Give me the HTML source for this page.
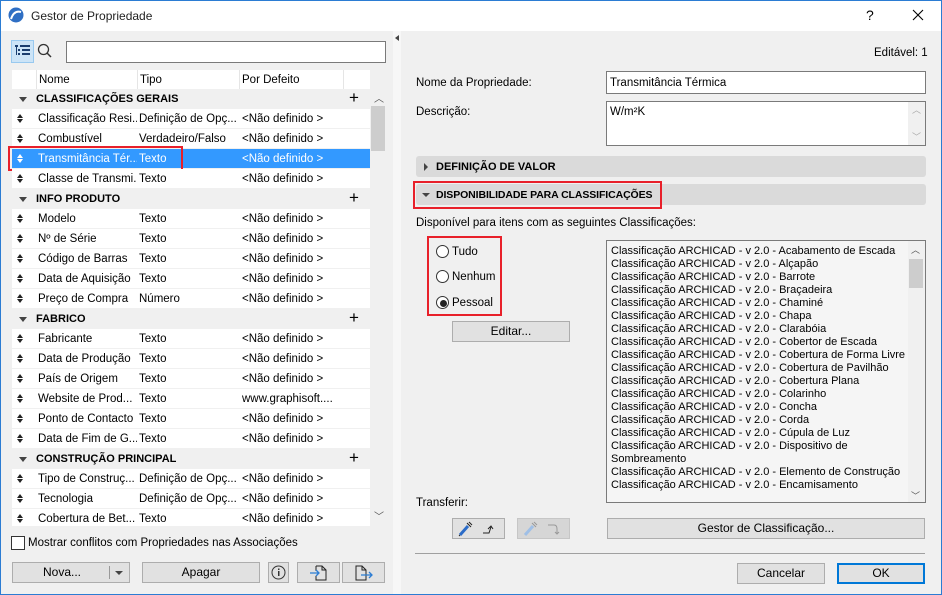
<!DOCTYPE html>
<html><head><meta charset="utf-8">
<style>
*{box-sizing:border-box;margin:0;padding:0}
body{width:942px;height:595px;overflow:hidden;font-family:"Liberation Sans",sans-serif;font-size:12px;color:#000;background:#f0f0f0;position:relative}
.a{position:absolute}
.win{left:0;top:0;width:942px;height:595px;border:1px solid #2b7cd3;background:#f0f0f0}
.title{left:1px;top:1px;width:940px;height:30px;background:#fff}
.btn{position:absolute;background:#e1e1e1;border:1px solid #adadad;text-align:center;line-height:18px;font-size:12px}
.row{position:absolute;left:12px;width:358px;height:19px;background:#fff;line-height:20px;white-space:nowrap;font-size:11.5px}
.grp{position:absolute;left:12px;width:358px;height:19px;background:#f0f0f0;line-height:20px;font-weight:bold;font-size:11px}
.c1{position:absolute;left:26px;width:99px;overflow:hidden}.c2{position:absolute;left:127px;width:101px;overflow:hidden}.c3{position:absolute;left:230px}
.sort{position:absolute;left:5px;top:5px;width:7px;height:10px}
.sort:before{content:"";position:absolute;left:0;top:0;border-left:3.5px solid transparent;border-right:3.5px solid transparent;border-bottom:4px solid #222}
.sort:after{content:"";position:absolute;left:0;top:5px;border-left:3.5px solid transparent;border-right:3.5px solid transparent;border-top:4px solid #222}
.sel .sort:before{border-bottom-color:#fff}.sel .sort:after{border-top-color:#fff}
.plus{position:absolute;left:337px;top:-1px;font-size:17px;font-weight:normal}
.tri{position:absolute;left:7px;top:8px;width:0;height:0;border-left:4px solid transparent;border-right:4px solid transparent;border-top:5px solid #444}
.lst div{height:13px;line-height:13px;white-space:nowrap;font-size:11px}
.radio{position:absolute;width:13px;height:13px;border:1px solid #333;border-radius:50%;background:#fff}
</style></head><body>
<div class="a win"></div>
<div class="a title"></div>
<svg class="a" style="left:8px;top:7px" width="16" height="16"><circle cx="8" cy="8" r="7.5" fill="#2f6fc4"/><path d="M3 12 Q6 3 13 5" stroke="#fff" stroke-width="2" fill="none"/></svg>
<div class="a" style="left:31px;top:9px;font-size:12px;color:#222">Gestor de Propriedade</div>
<div class="a" style="left:866px;top:7px;font-size:14px">?</div>
<svg class="a" style="left:912px;top:9px" width="12" height="12"><path d="M1 1L11 11M11 1L1 11" stroke="#000" stroke-width="1.1"/></svg>

<div class="a" style="left:11px;top:40px;width:23px;height:23px;background:#cce4f7;border:1px solid #99c9ef"></div>
<svg class="a" style="left:14px;top:44px" width="18" height="14"><g fill="#1a3d6e"><rect x="1" y="1" width="3" height="2"/><rect x="6" y="1" width="10" height="2"/><rect x="4" y="5" width="2" height="2"/><rect x="8" y="5" width="8" height="2"/><rect x="4" y="9" width="2" height="2"/><rect x="8" y="9" width="8" height="2"/><rect x="2" y="3" width="1" height="8"/></g></svg>
<svg class="a" style="left:37px;top:43px" width="16" height="16"><circle cx="6.5" cy="6.5" r="5" stroke="#333" stroke-width="1.3" fill="none"/><path d="M10 10L14 14" stroke="#333" stroke-width="1.5"/></svg>
<div class="a" style="left:66px;top:41px;width:320px;height:22px;border:1px solid #7a7a7a;background:#fff"></div>

<div class="a" style="left:12px;top:70px;width:358px;height:19px;background:#fff"></div>
<div class="a" style="left:36px;top:70px;width:1px;height:19px;background:#e5e5e5"></div>
<div class="a" style="left:137px;top:70px;width:1px;height:19px;background:#e5e5e5"></div>
<div class="a" style="left:239px;top:70px;width:1px;height:19px;background:#e5e5e5"></div>
<div class="a" style="left:343px;top:70px;width:1px;height:19px;background:#e5e5e5"></div>
<div class="a" style="left:39px;top:74px;font-size:11.5px">Nome</div>
<div class="a" style="left:140px;top:74px;font-size:11.5px">Tipo</div>
<div class="a" style="left:242px;top:74px;font-size:11.5px">Por Defeito</div>

<div class="grp" style="top:89px"><span class="tri"></span><span style="position:absolute;left:24px">CLASSIFICAÇÕES GERAIS</span><span class="plus">+</span></div>
<div class="row" style="top:109px"><span class="sort"></span><span class="c1">Classificação Resi...</span><span class="c2">Definição de Opç...</span><span class="c3">&lt;Não definido &gt;</span></div>
<div class="row" style="top:129px"><span class="sort"></span><span class="c1">Combustível</span><span class="c2">Verdadeiro/Falso</span><span class="c3">&lt;Não definido &gt;</span></div>
<div class="row sel" style="top:149px;background:#3399ff;color:#fff"><span class="sort"></span><span class="c1">Transmitância Tér...</span><span class="c2">Texto</span><span class="c3">&lt;Não definido &gt;</span></div>
<div class="a" style="left:8px;top:146px;width:175px;height:25px;border:2px solid #e8202a"></div>
<div class="row" style="top:169px"><span class="sort"></span><span class="c1">Classe de Transmi...</span><span class="c2">Texto</span><span class="c3">&lt;Não definido &gt;</span></div>
<div class="grp" style="top:189px"><span class="tri"></span><span style="position:absolute;left:24px">INFO PRODUTO</span><span class="plus">+</span></div>
<div class="row" style="top:209px"><span class="sort"></span><span class="c1">Modelo</span><span class="c2">Texto</span><span class="c3">&lt;Não definido &gt;</span></div>
<div class="row" style="top:229px"><span class="sort"></span><span class="c1">Nº de Série</span><span class="c2">Texto</span><span class="c3">&lt;Não definido &gt;</span></div>
<div class="row" style="top:249px"><span class="sort"></span><span class="c1">Código de Barras</span><span class="c2">Texto</span><span class="c3">&lt;Não definido &gt;</span></div>
<div class="row" style="top:269px"><span class="sort"></span><span class="c1">Data de Aquisição</span><span class="c2">Texto</span><span class="c3">&lt;Não definido &gt;</span></div>
<div class="row" style="top:289px"><span class="sort"></span><span class="c1">Preço de Compra</span><span class="c2">Número</span><span class="c3">&lt;Não definido &gt;</span></div>
<div class="grp" style="top:309px"><span class="tri"></span><span style="position:absolute;left:24px">FABRICO</span><span class="plus">+</span></div>
<div class="row" style="top:329px"><span class="sort"></span><span class="c1">Fabricante</span><span class="c2">Texto</span><span class="c3">&lt;Não definido &gt;</span></div>
<div class="row" style="top:349px"><span class="sort"></span><span class="c1">Data de Produção</span><span class="c2">Texto</span><span class="c3">&lt;Não definido &gt;</span></div>
<div class="row" style="top:369px"><span class="sort"></span><span class="c1">País de Origem</span><span class="c2">Texto</span><span class="c3">&lt;Não definido &gt;</span></div>
<div class="row" style="top:389px"><span class="sort"></span><span class="c1">Website de Prod...</span><span class="c2">Texto</span><span class="c3">www.graphisoft....</span></div>
<div class="row" style="top:409px"><span class="sort"></span><span class="c1">Ponto de Contacto</span><span class="c2">Texto</span><span class="c3">&lt;Não definido &gt;</span></div>
<div class="row" style="top:429px"><span class="sort"></span><span class="c1">Data de Fim de G...</span><span class="c2">Texto</span><span class="c3">&lt;Não definido &gt;</span></div>
<div class="grp" style="top:449px"><span class="tri"></span><span style="position:absolute;left:24px">CONSTRUÇÃO PRINCIPAL</span><span class="plus">+</span></div>
<div class="row" style="top:469px"><span class="sort"></span><span class="c1">Tipo de Construç...</span><span class="c2">Definição de Opç...</span><span class="c3">&lt;Não definido &gt;</span></div>
<div class="row" style="top:489px"><span class="sort"></span><span class="c1">Tecnologia</span><span class="c2">Definição de Opç...</span><span class="c3">&lt;Não definido &gt;</span></div>
<div class="row" style="top:509px;height:17px"><span class="sort"></span><span class="c1">Cobertura de Bet...</span><span class="c2">Texto</span><span class="c3">&lt;Não definido &gt;</span></div>
<div class="a" style="left:370px;top:89px;width:15px;height:437px;background:#f0f0f0"></div>
<div class="a" style="left:371px;top:106px;width:14px;height:45px;background:#cdcdcd"></div>
<div class="a" style="left:374px;top:90px;font-size:10px;color:#555">︿</div>
<div class="a" style="left:374px;top:508px;font-size:10px;color:#555">﹀</div>

<div class="a" style="left:11px;top:536px;width:14px;height:14px;border:1px solid #333;background:#fff"></div>
<div class="a" style="left:28px;top:537px;font-size:11.5px">Mostrar conflitos com Propriedades nas Associações</div>
<div class="btn" style="left:12px;top:562px;width:118px;height:21px"><span style="position:absolute;left:30px">Nova...</span><span style="position:absolute;left:96px;top:3px;width:1px;height:13px;background:#999"></span><span style="position:absolute;left:102px;top:8px;border-left:4px solid transparent;border-right:4px solid transparent;border-top:4px solid #444"></span></div>
<div class="btn" style="left:142px;top:562px;width:118px;height:21px">Apagar</div>
<div class="btn" style="left:268px;top:562px;width:21px;height:21px"><svg style="position:absolute;left:2px;top:2px" width="15" height="15"><circle cx="7.5" cy="7.5" r="6.5" stroke="#333" fill="none"/><rect x="7" y="6" width="1.5" height="5" fill="#333"/><rect x="7" y="3.5" width="1.5" height="1.5" fill="#333"/></svg></div>
<div class="btn" style="left:297px;top:562px;width:43px;height:21px"><svg style="position:absolute;left:12px;top:2px" width="20" height="16"><path d="M6 1H12L16 5V15H6V11M6 6V1M12 1V5H16" stroke="#222" fill="none"/><path d="M0 8H9M6 5L9 8L6 11" stroke="#2b7cd3" fill="none" stroke-width="1.3"/></svg></div>
<div class="btn" style="left:342px;top:562px;width:43px;height:21px"><svg style="position:absolute;left:12px;top:2px" width="22" height="16"><path d="M1 1H7L11 5V15H1Z M7 1V5H11" stroke="#222" fill="none"/><path d="M6 10H17M14 7L17 10L14 13" stroke="#2b7cd3" fill="none" stroke-width="1.3"/></svg></div>

<div class="a" style="left:393px;top:31px;width:8px;height:563px;background:#f7f7f7"></div>
<div class="a" style="left:395px;top:35px;border-top:3px solid transparent;border-bottom:3px solid transparent;border-right:4px solid #444"></div>

<div class="a" style="left:874px;top:47px;font-size:11.5px">Editável: 1</div>
<div class="a" style="left:416px;top:77px;font-size:11.5px">Nome da Propriedade:</div>
<div class="a" style="left:606px;top:71px;width:320px;height:23px;border:1px solid #7a7a7a;background:#fff;padding:5px 3px;font-size:11.5px">Transmitância Térmica</div>
<div class="a" style="left:416px;top:106px;font-size:11.5px">Descrição:</div>
<div class="a" style="left:606px;top:101px;width:320px;height:45px;border:1px solid #7a7a7a;background:#fff;padding:4px 3px;font-size:11.5px">W/m²K</div>
<div class="a" style="left:908px;top:102px;width:17px;height:43px;background:#f0f0f0"></div>
<div class="a" style="left:912px;top:103px;font-size:9px;color:#aaa">︿</div>
<div class="a" style="left:912px;top:130px;font-size:9px;color:#aaa">﹀</div>

<div class="a" style="left:416px;top:156px;width:510px;height:21px;background:#dadada;border-radius:3px"></div>
<div class="a" style="left:424px;top:163px;border-top:4px solid transparent;border-bottom:4px solid transparent;border-left:4px solid #444"></div>
<div class="a" style="left:436px;top:161px;font-weight:bold;font-size:11px">DEFINIÇÃO DE VALOR</div>
<div class="a" style="left:416px;top:184px;width:510px;height:21px;background:#dadada;border-radius:3px"></div>
<div class="a" style="left:422px;top:193px;border-left:4px solid transparent;border-right:4px solid transparent;border-top:4px solid #444"></div>
<div class="a" style="left:436px;top:189px;font-weight:bold;font-size:10.5px;letter-spacing:-0.1px">DISPONIBILIDADE PARA CLASSIFICAÇÕES</div>
<div class="a" style="left:413px;top:181px;width:249px;height:28px;border:2px solid #e8202a"></div>
<div class="a" style="left:416px;top:217px;font-size:11.5px">Disponível para itens com as seguintes Classificações:</div>

<div class="a" style="left:427px;top:236px;width:75px;height:80px;border:2px solid #e8202a"></div>
<div class="radio" style="left:436px;top:245px"></div><div class="a" style="left:452px;top:246px;font-size:11.5px">Tudo</div>
<div class="radio" style="left:436px;top:270px"></div><div class="a" style="left:452px;top:271px;font-size:11.5px">Nenhum</div>
<div class="radio" style="left:436px;top:296px"></div><div class="a" style="left:440px;top:300px;width:7px;height:7px;border-radius:50%;background:#222"></div><div class="a" style="left:452px;top:297px;font-size:11.5px">Pessoal</div>
<div class="btn" style="left:452px;top:321px;width:118px;height:21px">Editar...</div>

<div class="a lst" style="left:606px;top:240px;width:320px;height:263px;border:1px solid #7a7a7a;background:#f5f5f5;padding:4px 0 0 4px;overflow:hidden">
<div>Classificação ARCHICAD - v 2.0 - Acabamento de Escada</div>
<div>Classificação ARCHICAD - v 2.0 - Alçapão</div>
<div>Classificação ARCHICAD - v 2.0 - Barrote</div>
<div>Classificação ARCHICAD - v 2.0 - Braçadeira</div>
<div>Classificação ARCHICAD - v 2.0 - Chaminé</div>
<div>Classificação ARCHICAD - v 2.0 - Chapa</div>
<div>Classificação ARCHICAD - v 2.0 - Clarabóia</div>
<div>Classificação ARCHICAD - v 2.0 - Cobertor de Escada</div>
<div>Classificação ARCHICAD - v 2.0 - Cobertura de Forma Livre</div>
<div>Classificação ARCHICAD - v 2.0 - Cobertura de Pavilhão</div>
<div>Classificação ARCHICAD - v 2.0 - Cobertura Plana</div>
<div>Classificação ARCHICAD - v 2.0 - Colarinho</div>
<div>Classificação ARCHICAD - v 2.0 - Concha</div>
<div>Classificação ARCHICAD - v 2.0 - Corda</div>
<div>Classificação ARCHICAD - v 2.0 - Cúpula de Luz</div>
<div>Classificação ARCHICAD - v 2.0 - Dispositivo de</div>
<div>Sombreamento</div>
<div>Classificação ARCHICAD - v 2.0 - Elemento de Construção</div>
<div>Classificação ARCHICAD - v 2.0 - Encamisamento</div>
</div>
<div class="a" style="left:908px;top:241px;width:17px;height:261px;background:#f0f0f0"></div>
<div class="a" style="left:909px;top:259px;width:14px;height:29px;background:#cdcdcd"></div>
<div class="a" style="left:911px;top:243px;font-size:9px;color:#555">︿</div>
<div class="a" style="left:911px;top:489px;font-size:9px;color:#555">﹀</div>

<div class="a" style="left:416px;top:497px;font-size:11.5px">Transferir:</div>
<div class="btn" style="left:452px;top:518px;width:53px;height:21px"><svg style="position:absolute;left:4px;top:1px" width="44" height="18"><path d="M3 15L11 6" stroke="#2b6cc8" stroke-width="3"/><path d="M10 3L14 7M12 2L15 5" stroke="#222"/><path d="M2 16L3 15" stroke="#222"/><path d="M26 13H32L34 7M31 9L34 6L36 9" stroke="#222" fill="none"/></svg></div>
<div class="btn" style="left:517px;top:518px;width:53px;height:21px;background:#d6d6d6;border-color:#c6c6c6"><svg style="position:absolute;left:4px;top:1px" width="44" height="18"><path d="M3 15L11 6" stroke="#9fbfe6" stroke-width="3"/><path d="M10 3L14 7M12 2L15 5" stroke="#999"/><path d="M26 5H32Q35 5 35 9V14M33 12L35 14L37 12" stroke="#999" fill="none"/></svg></div>
<div class="btn" style="left:607px;top:518px;width:318px;height:21px">Gestor de Classificação...</div>
<div class="a" style="left:415px;top:553px;width:510px;height:1px;background:#a0a0a0"></div>
<div class="btn" style="left:737px;top:563px;width:88px;height:21px">Cancelar</div>
<div class="btn" style="left:837px;top:563px;width:88px;height:21px;border:2px solid #0078d7;line-height:17px">OK</div>
</body></html>
